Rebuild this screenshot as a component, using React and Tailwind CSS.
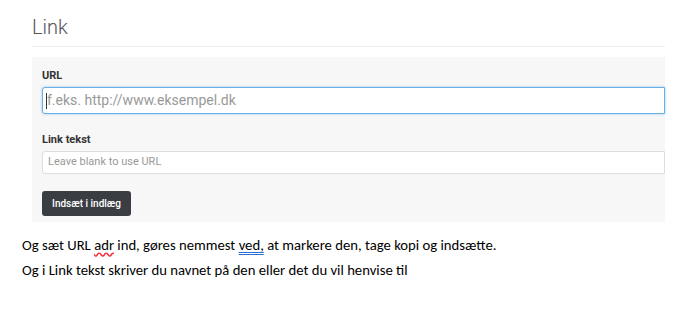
export default function App() {
  return (
    <div className="w-[678px] h-[313px] bg-white overflow-hidden">
      <div className="w-[665px] pl-[32px] pt-[15px] font-['Roboto',sans-serif]">
        <h1 className="text-[20px] leading-[24px] font-light text-[#555]">Link</h1>
        <div className="mt-[7px] border-t border-[#eee]" />
        <div className="mt-[10px] h-[165px] bg-[#f7f7f7] pl-[10px] pt-[12px]">
          <label className="block text-[11px] leading-[14px] font-bold text-[#333]">URL</label>
          <div className="mt-[4px] h-[27px] flex items-center border border-[#66afe9] rounded-l-[3px] bg-white pl-[3px] shadow-[0_0_3px_rgba(102,175,233,0.6)]">
            <span className="w-px h-[16px] bg-[#333]" />
            <span className="text-[14px] text-[#999]">f.eks. http://www.eksempel.dk</span>
          </div>
          <label className="block mt-[19px] text-[11px] leading-[14px] font-bold text-[#333]">Link tekst</label>
          <div className="mt-[4px] h-[23px] flex items-center border border-[#ddd] rounded-l-[3px] bg-white pl-[5px]">
            <span className="text-[11px] text-[#999]">Leave blank to use URL</span>
          </div>
          <button className="mt-[17px] w-[89px] h-[25px] rounded-[3px] bg-[#3a3d42] text-white text-[10px] font-medium">
            Indsæt i indlæg
          </button>
        </div>
      </div>
      <div className="pl-[22px] pt-[14px] font-['Carlito','Open_Sans',sans-serif] text-[14.7px] text-black">
        <p className="leading-[18px]">
          Og sæt URL{' '}
          <span className="underline decoration-wavy decoration-red-500 underline-offset-2">adr</span> ind, gøres nemmest{' '}
          <span className="underline decoration-double decoration-[#2b6fd6] underline-offset-2">ved,</span> at markere den, tage kopi og indsætte.
        </p>
        <p className="mt-[7px] leading-[18px]">Og i Link tekst skriver du navnet på den eller det du vil henvise til</p>
      </div>
    </div>
  );
}
